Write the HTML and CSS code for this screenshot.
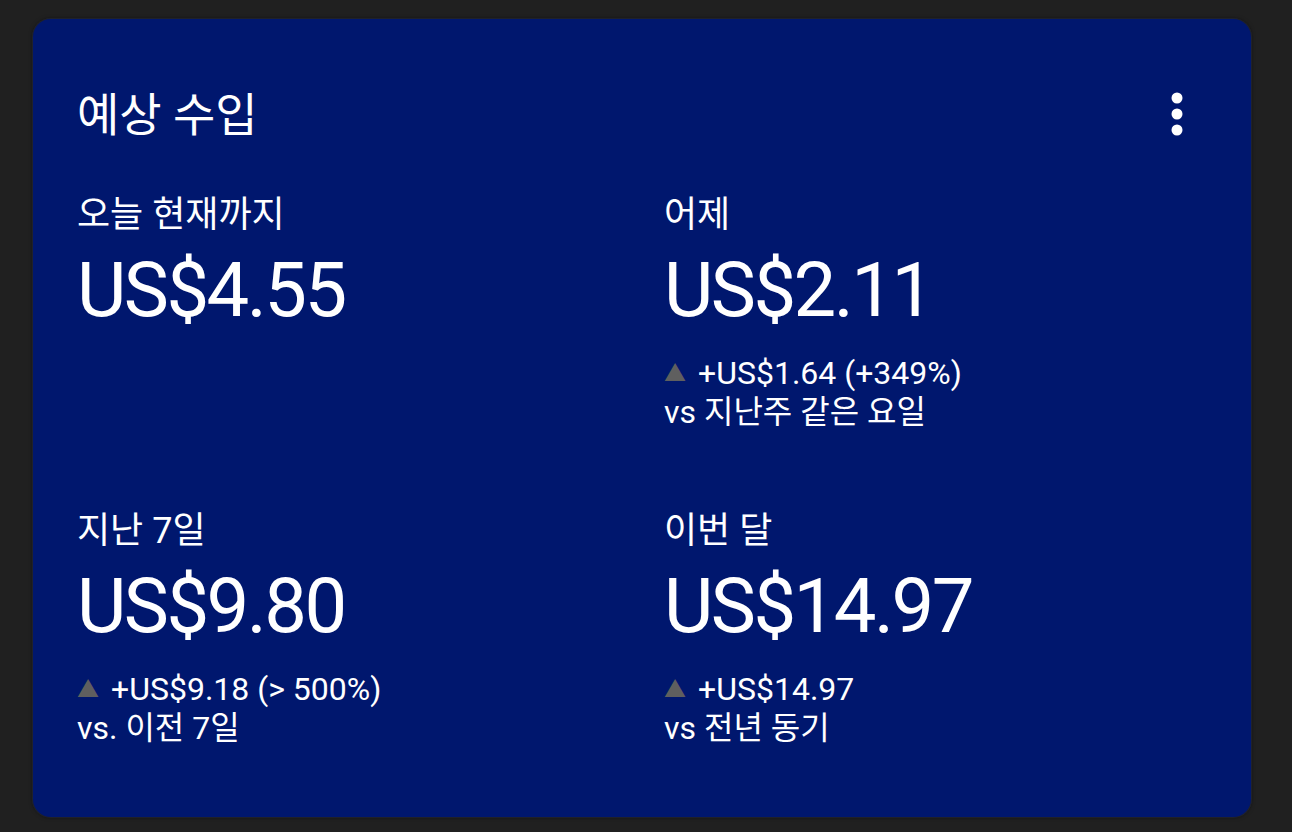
FILE: index.html
```html
<!DOCTYPE html>
<html lang="ko">
<head>
<meta charset="utf-8">
<link rel="stylesheet" href="styles.css">
</head>
<body>
<div class="card">
  <div class="header">
    <h1 class="title">예상 수입</h1>
    <button class="menu" aria-label="more">
      <svg width="12" height="44" viewBox="0 0 12 44"><circle cx="6" cy="6" r="5.5" fill="#fff"/><circle cx="6" cy="22" r="5.5" fill="#fff"/><circle cx="6" cy="38" r="5.5" fill="#fff"/></svg>
    </button>
  </div>
  <div class="grid">
    <div class="cell">
      <div class="label">오늘 현재까지</div>
      <div class="amount">US$4.55</div>
    </div>
    <div class="cell">
      <div class="label">어제</div>
      <div class="amount">US$2.11</div>
      <div class="delta"><span class="tri">▲</span>+US$1.64 (+349%)</div>
      <div class="cmp">vs 지난주 같은 요일</div>
    </div>
    <div class="cell">
      <div class="label">지난 7일</div>
      <div class="amount">US$9.80</div>
      <div class="delta"><span class="tri">▲</span>+US$9.18 (&gt; 500%)</div>
      <div class="cmp">vs. 이전 7일</div>
    </div>
    <div class="cell">
      <div class="label">이번 달</div>
      <div class="amount">US$14.97</div>
      <div class="delta"><span class="tri">▲</span>+US$14.97</div>
      <div class="cmp">vs 전년 동기</div>
    </div>
  </div>
</div>
</body>
</html>
```
FILE: styles.css
```css
html, body {
  margin: 0;
  padding: 0;
  background: #202020;
  height: 100%;
}
body {
  padding: 19px 41px 15px 33px;
  box-sizing: border-box;
  font-family: Roboto, "Noto Sans CJK KR", sans-serif;
  color: #fff;
}
.card {
  background: #00176e;
  border-radius: 18px;
  height: 798px;
  box-sizing: border-box;
  padding: 0 44px;
  box-shadow: 0 0 4px rgba(0,0,0,0.6), 0 0 0 1px #2a2d3a;
}
.header {
  display: flex;
  justify-content: space-between;
  align-items: flex-start;
  height: 176px;
  box-sizing: border-box;
  padding-top: 69px;
}
.title {
  margin: 0;
  font-weight: 400;
  font-size: 46px;
  line-height: 54px;
}
.menu {
  background: none;
  border: 0;
  padding: 0;
  margin: 4px 24px 0 0;
  display: flex;
}
.grid {
  display: grid;
  grid-template-columns: 587px 1fr;
  grid-auto-rows: 316px;
}
.label {
  font-size: 36px;
  line-height: 40px;
}
.amount {
  font-size: 76px;
  line-height: 90px;
  margin-top: 10px;
  letter-spacing: -2.5px;
}
.delta, .cmp {
  font-size: 32px;
  line-height: 38px;
}
.delta {
  margin-top: 19px;
}
.tri {
  color: #5f5f5f;
  font-size: 22px;
  margin-right: 12px;
  vertical-align: 3px;
}
```
